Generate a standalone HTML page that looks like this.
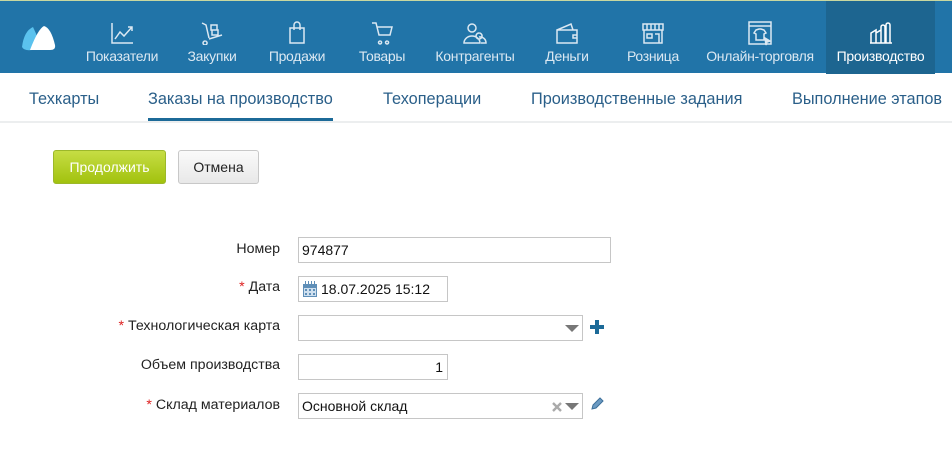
<!DOCTYPE html>
<html><head><meta charset="utf-8"><style>
*{box-sizing:border-box;margin:0;padding:0}
body{width:952px;height:451px;overflow:hidden;background:#fff;font-family:"Liberation Sans",Arial,sans-serif;position:relative}
.top{position:absolute;left:0;top:0;width:952px;height:73px;background:#2174a8;border-top:1px solid #c8d7a0}
.it{position:absolute;top:0;height:73px;color:#dbe8f2;font-size:14px;text-align:center}
.it span{position:absolute;left:0;right:0;top:47px;white-space:nowrap;letter-spacing:-0.3px}
.it svg{position:absolute;top:20px;left:50%;margin-left:-13px}
.act{background:#1d6590;color:#fff}
.sub{position:absolute;top:73px;left:0;width:952px;height:50px;border-bottom:2px solid #eceeef}
.sub a{position:absolute;top:17px;font-size:16.3px;color:#2a5f89;white-space:nowrap}
.ul{position:absolute;left:148px;top:118px;width:185px;height:3px;background:#1c6a98}
.btn{position:absolute;top:150px;height:34px;border-radius:3px;font-size:14px;line-height:32px;text-align:center}
.lbl{position:absolute;right:672px;font-size:14.2px;color:#222;white-space:nowrap}
.lbl b{color:#d22;font-weight:normal}
.in{position:absolute;border:1px solid #c6c6c6;height:26px;font-size:14px;line-height:24px;padding-left:3px;color:#111;background:#fff}
</style></head><body>
<div class="top">
<svg style="position:absolute;left:22px;top:24px" width="34" height="26" viewBox="0 0 34 26"><path d="M0 22 Q2 6 11 2 Q14 8 16 14 L10 25 Q2 26 0 22Z" fill="#5bc2ee"/><path d="M8 25 Q16 4 22 1 Q29 3 33 20 Q34 25 28 25Z" fill="#fff"/></svg>
<div class="it" style="left:82px;width:80px"><svg width="26" height="24" viewBox="0 0 26 24" fill="none" stroke="#dbe8f2" stroke-width="1.5"><path d="M3 2V22H24M6 18l5-7 4 4 8-9M19 6h4v4"/></svg><span>Показатели</span></div>
<div class="it" style="left:178px;width:68px"><svg width="26" height="24" viewBox="0 0 26 24" fill="none" stroke="#dbe8f2" stroke-width="1.5"><path d="M3 2l4 2 3 13M6 20a2 2 0 1 0 .1 0M10 18l13-4M12 4h6v5h-6zM13 9h6v5h-6z"/></svg><span>Закупки</span></div>
<div class="it" style="left:262px;width:70px"><svg width="26" height="24" viewBox="0 0 26 24" fill="none" stroke="#dbe8f2" stroke-width="1.5"><path d="M6 7h14v15H6zM10 9V4a3 3 0 0 1 6 0v5"/></svg><span>Продажи</span></div>
<div class="it" style="left:352px;width:60px"><svg width="26" height="24" viewBox="0 0 26 24" fill="none" stroke="#dbe8f2" stroke-width="1.5"><path d="M3 2h4l3 12h11l2-8H8M11 20a1.5 1.5 0 1 0 .1 0M18 20a1.5 1.5 0 1 0 .1 0"/></svg><span>Товары</span></div>
<div class="it" style="left:430px;width:90px"><svg width="26" height="24" viewBox="0 0 26 24" fill="none" stroke="#dbe8f2" stroke-width="1.5"><circle cx="10" cy="7" r="4"/><path d="M2 22a8 7 0 0 1 16 0zM17 12a3 3 0 1 0 .1 0M17 16a6 6 0 0 1 7 6h-5"/></svg><span>Контрагенты</span></div>
<div class="it" style="left:535px;width:64px"><svg width="26" height="24" viewBox="0 0 26 24" fill="none" stroke="#dbe8f2" stroke-width="1.5"><path d="M3 9h20v13H3zM3 9l14-6 2 6M19 14h4v3h-4z"/></svg><span>Деньги</span></div>
<div class="it" style="left:615px;width:76px"><svg width="26" height="24" viewBox="0 0 26 24" fill="none" stroke="#dbe8f2" stroke-width="1.5"><path d="M3 3h20v6H3zM4 9v13h18V9M7 3v6M11 3v6M15 3v6M19 3v6M7 13h5v4H7zM15 13h4v9"/></svg><span>Розница</span></div>
<div class="it" style="left:700px;width:120px"><svg width="26" height="26" viewBox="0 0 26 26" fill="none" stroke="#dbe8f2" stroke-width="1.5"><path d="M2 1h22v22H2zM2 5h22M9 9l3-1h2l3 1 2 3-2 1v6H9v-6l-2-1z"/><path d="M18 17l5 3-3 1-1 3z" fill="#dbe8f2"/></svg><span>Онлайн-торговля</span></div>
<div class="it act" style="left:826px;width:109px"><svg width="26" height="24" viewBox="0 0 26 24" fill="none" stroke="#fff" stroke-width="1.5"><path d="M3 22V12l5-3v13M8 12l5-3v13M13 22V6a2 2 0 0 1 4 0v16M18 22V4a2 2 0 0 1 4 0v18M2 22h22"/></svg><span>Производство</span></div>
</div>
<div class="sub">
<a style="left:29px">Техкарты</a>
<a style="left:148px">Заказы на производство</a>
<a style="left:383px">Техоперации</a>
<a style="left:531px">Производственные задания</a>
<a style="left:792px">Выполнение этапов</a>
</div>
<div class="ul"></div>
<div class="btn" style="left:53px;width:113px;background:linear-gradient(#c6dd44,#a2c20e);border:1px solid #9cb82a;color:#fff">Продолжить</div>
<div class="btn" style="left:178px;width:81px;background:linear-gradient(#fafafa,#e8e8e8);border:1px solid #c8c8c8;color:#222">Отмена</div>

<div class="lbl" style="top:241px">Номер</div>
<div class="in" style="left:298px;top:237px;width:313px">974877</div>
<div class="lbl" style="top:279px"><b>*</b> Дата</div>
<div class="in" style="left:298px;top:276px;width:150px;padding-left:22px">18.07.2025 15:12
<svg style="position:absolute;left:4px;top:4px" width="14" height="16" viewBox="0 0 14 16"><rect x="0" y="3" width="14" height="13" fill="#5f8fb8"/><rect x="1" y="7" width="12" height="8" fill="#cfe0ef"/><g fill="#5f8fb8"><rect x="2" y="8" width="2" height="2"/><rect x="6" y="8" width="2" height="2"/><rect x="10" y="8" width="2" height="2"/><rect x="2" y="12" width="2" height="2"/><rect x="6" y="12" width="2" height="2"/><rect x="10" y="12" width="2" height="2"/><rect x="2" y="0" width="1" height="4"/><rect x="5" y="0" width="1" height="4"/><rect x="8" y="0" width="1" height="4"/><rect x="11" y="0" width="1" height="4"/></g></svg></div>
<div class="lbl" style="top:318px"><b>*</b> Технологическая карта</div>
<div class="in" style="left:298px;top:315px;width:285px"><svg style="position:absolute;right:3px;top:9px" width="14" height="7"><path d="M0 0h14L7 7z" fill="#777"/></svg></div>
<svg style="position:absolute;left:590px;top:320px" width="14" height="14"><path d="M5 0h4v5h5v4H9v5H5V9H0V5h5z" fill="#1c6a98"/></svg>
<div class="lbl" style="top:357px">Объем производства</div>
<div class="in" style="left:298px;top:354px;width:150px;text-align:right;padding-right:4px">1</div>
<div class="lbl" style="top:397px"><b>*</b> Склад материалов</div>
<div class="in" style="left:298px;top:393px;width:285px">Основной склад
<svg style="position:absolute;right:20px;top:8px" width="10" height="10"><path d="M1 1l8 8M9 1l-8 8" stroke="#aaa" stroke-width="2.4"/></svg>
<svg style="position:absolute;right:3px;top:9px" width="14" height="7"><path d="M0 0h14L7 7z" fill="#777"/></svg></div>
<svg style="position:absolute;left:590px;top:397px" width="14" height="14"><path d="M2 12l1-4 7-7 3 3-7 7z" fill="#6b9ac2" stroke="#3d6f9a"/></svg>
</body></html>
